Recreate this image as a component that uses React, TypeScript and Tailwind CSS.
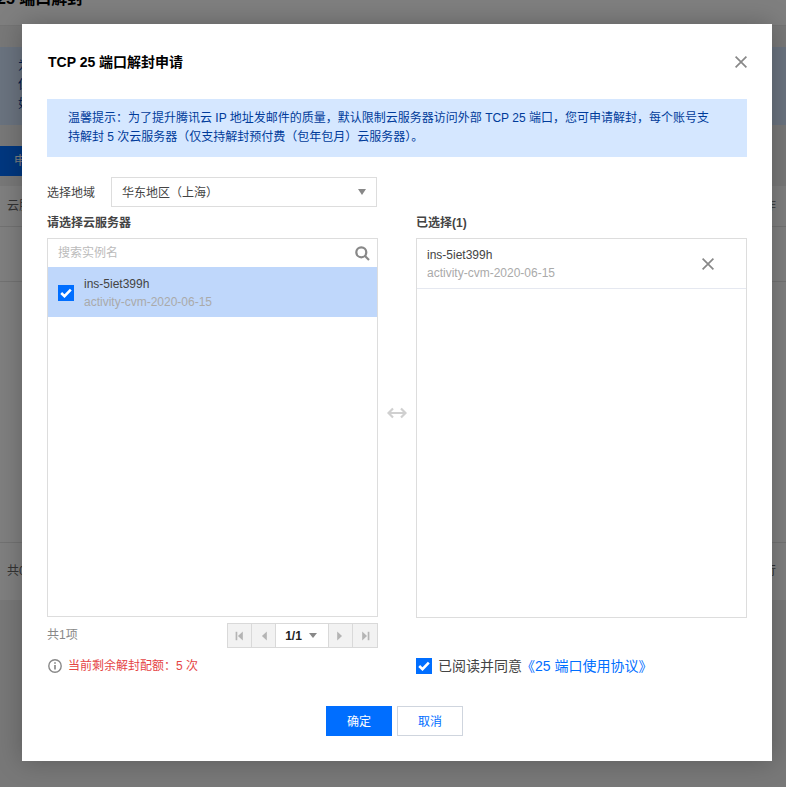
import React from "react";

function Check({ className }: { className: string }) {
  return (
    <span className={`flex items-center justify-center bg-[#006eff] ${className}`}>
      <svg width="12" height="10" viewBox="0 0 12 10" fill="none">
        <path d="M1.2 5 L4.5 8.2 L10.8 1.6" stroke="#fff" strokeWidth="2.6" />
      </svg>
    </span>
  );
}

function Cross({ size, color }: { size: number; color: string }) {
  return (
    <svg width={size} height={size} viewBox="0 0 12 12" fill="none">
      <path d="M0.6 0.6 L11.4 11.4 M11.4 0.6 L0.6 11.4" stroke={color} strokeWidth="1.7" />
    </svg>
  );
}

function PagerBtn({ dir, bar }: { dir: "l" | "r"; bar?: boolean }) {
  return (
    <span className="flex h-full w-6 items-center justify-center border-r border-[#d9d9d9] bg-[#f2f2f2] last:border-r-0">
      <svg width="9" height="10" viewBox="0 0 8 9" fill="#b4b4b4">
        {dir === "l" ? (
          <>
            {bar && <rect x="0.5" y="0.7" width="1.5" height="7.6" />}
            <path d="M7 0.4 V8.6 L2.6 4.5 Z" />
          </>
        ) : (
          <>
            <path d="M1 0.4 V8.6 L5.4 4.5 Z" />
            {bar && <rect x="6" y="0.7" width="1.5" height="7.6" />}
          </>
        )}
      </svg>
    </span>
  );
}

export default function App() {
  return (
    <div className="relative h-[787px] w-[786px] overflow-hidden bg-[#f1f1f1] font-['Liberation_Sans','Noto_Sans_CJK_SC',sans-serif] text-xs text-[#444]">
      {/* page behind the dialog */}
      <div className="flex h-[26px] items-end border-b border-[#e8e8e8] bg-white pb-[16px]">
        <span className="ml-[-3px] text-base font-bold leading-[20px] text-black">25 端口解封</span>
      </div>
      <div className="mt-[21px] h-[78px] bg-[#d5e7ff] px-[18px] pt-[10px] leading-[19px] text-[#003b9a]">
        <div className="flex justify-between"><span>为</span><span className="mr-[-4px]">服务</span></div>
        <div className="flex justify-between"><span>但</span><span className="mr-[-4px]">从</span></div>
        <div>如</div>
      </div>
      <div className="mt-[21px] h-[30px] w-[60px] bg-[#006eff] pl-[14px] text-xs leading-[30px] text-white">申请</div>
      <div className="mt-[10px] h-[414px] bg-white">
        <div className="flex h-[41px] items-center justify-between border-b border-[#e5e5e5] px-[7px] text-[#666]">
          <span>云服务器</span><span className="mr-[3px]">操作</span>
        </div>
        <div className="h-[55px] border-b border-[#e5e5e5]" />
        <div className="h-[261px] border-b border-[#e5e5e5]" />
        <div className="flex h-[56px] items-center justify-between px-[7px] text-[#666]">
          <span>共0项</span><span className="mr-[3px]">每页行</span>
        </div>
      </div>
      <div className="absolute inset-0 bg-black/50" />

      {/* dialog */}
      <div className="absolute left-[22px] top-[24px] flex h-[737px] w-[750px] flex-col bg-white px-[25px] shadow-[0_0_24px_rgba(0,0,0,0.25)]">
        <div className="flex h-[75px] items-start justify-between pt-[29px]">
          <h2 className="pl-px text-sm font-bold leading-[18px] text-black">TCP 25 端口解封申请</h2>
          <span className="mt-[3px]"><Cross size={12} color="#888888" /></span>
        </div>

        <div className="h-[58px] bg-[#d5e7ff] pl-[21px] pr-[30px] pt-[10px] leading-[19px] text-[#003b9a]">
          温馨提示：为了提升腾讯云 IP 地址发邮件的质量，默认限制云服务器访问外部 TCP 25 端口，您可申请解封，每个账号支持解封 5 次云服务器（仅支持解封预付费（包年包月）云服务器）。
        </div>

        <div className="mt-[20px] flex h-[30px] items-center">
          <span className="w-[64px] pt-px text-[#444]">选择地域</span>
          <div className="flex h-[30px] w-[266px] items-center justify-between border border-[#dddddd] pl-[10px] pr-[10px] text-[#444]">
            <span className="pt-[2px]">华东地区（上海）</span>
            <span className="h-0 w-0 border-x-[4px] border-t-[6px] border-x-transparent border-t-[#888888]" />
          </div>
        </div>

        <div className="flex">
          <div className="w-[331px]">
            <div className="flex h-[31px] items-center font-bold text-[#444]">请选择云服务器</div>
            <div className="flex h-[379px] flex-col border border-[#dddddd]">
              <div className="flex h-[28px] items-center justify-between pl-[10px] pr-[7px]">
                <span className="text-[#bbbbbb]">搜索实例名</span>
                <svg width="15" height="15" viewBox="0 0 15 15" fill="none" stroke="#888888" strokeWidth="2.2">
                  <circle cx="6.3" cy="6.3" r="5" />
                  <path d="M10 10 L14 14" />
                </svg>
              </div>
              <div className="flex h-[50px] items-center gap-[10px] bg-[#bfd7fb] pl-[10px]">
                <Check className="mt-[2px] h-4 w-4" />
                <div className="mt-[2px] leading-[18px]">
                  <div className="text-[#444]">ins-5iet399h</div>
                  <div className="text-[#aaaaaa]">activity-cvm-2020-06-15</div>
                </div>
              </div>
            </div>
          </div>

          <div className="flex w-[38px] items-center justify-center">
            <svg width="20" height="12" viewBox="0 0 20 12" fill="none" stroke="#d0d0d0" strokeWidth="2.2">
              <path d="M1.5 6 H18.5 M6 1.5 L1.5 6 L6 10.5 M14 1.5 L18.5 6 L14 10.5" />
            </svg>
          </div>

          <div className="w-[331px]">
            <div className="flex h-[31px] items-center font-bold text-[#444]">已选择(1)</div>
            <div className="h-[380px] border border-[#dddddd]">
              <div className="flex h-[50px] items-center justify-between border-b border-[#e5e8f0] pl-[10px] pr-[32px]">
                <div className="leading-[18px]">
                  <div className="text-[#444]">ins-5iet399h</div>
                  <div className="text-[#aaaaaa]">activity-cvm-2020-06-15</div>
                </div>
                <Cross size={12} color="#888888" />
              </div>
            </div>
          </div>
        </div>

        <div className="mt-[5px] flex">
          <div className="flex h-[25px] w-[331px] items-center justify-between">
            <span className="pb-[2px] text-[#888888]">共1项</span>
            <div className="flex h-[25px] w-[151px] border border-[#d9d9d9]">
              <PagerBtn dir="l" bar />
              <PagerBtn dir="l" />
              <span className="flex w-[54px] items-center justify-center gap-[7px] border-r border-[#d9d9d9] bg-white pr-[2px] font-bold text-[#222]">
                1/1
                <span className="h-0 w-0 border-x-[4px] border-t-[5px] border-x-transparent border-t-[#888888]" />
              </span>
              <PagerBtn dir="r" />
              <PagerBtn dir="r" bar />
            </div>
          </div>
        </div>

        <div className="mt-[10px] flex h-[16px] items-center">
          <div className="flex w-[369px] items-center gap-[6px] pl-px">
            <svg width="14" height="14" viewBox="0 0 14 14" fill="none" stroke="#888888" strokeWidth="1.4">
              <circle cx="7" cy="7" r="6.2" />
              <path d="M7 6 V10.6" strokeWidth="1.7" />
              <path d="M7 3.2 V4.8" strokeWidth="1.7" />
            </svg>
            <span className="text-[#e54545]">当前剩余解封配额：5 次</span>
          </div>
          <Check className="h-4 w-4" />
          <span className="ml-[6px] text-sm text-[#444]">已阅读并同意</span>
          <span className="ml-[-1px] text-sm text-[#006eff]">《25 端口使用协议》</span>
        </div>

        <div className="mt-[32px] flex justify-center">
          <button className="mr-[5px] h-[30px] w-[66px] bg-[#006eff] pt-[2px] text-xs text-white">确定</button>
          <button className="mr-[5px] h-[30px] w-[66px] border border-[#cfd5de] bg-white pt-[2px] text-xs text-[#006eff]">取消</button>
        </div>
      </div>
    </div>
  );
}
